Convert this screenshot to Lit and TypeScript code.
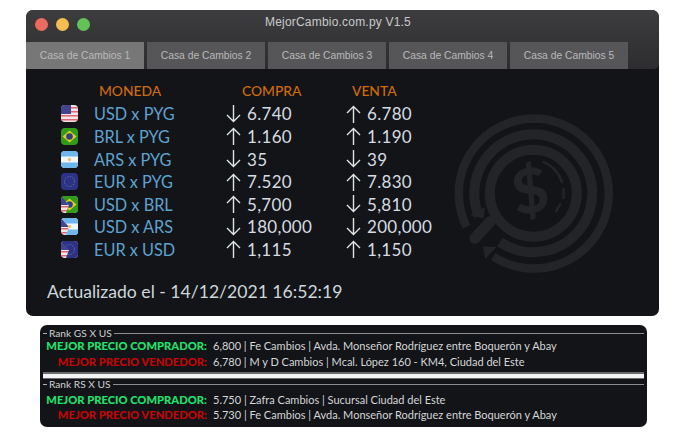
import { LitElement, html, svg, css } from 'lit'
import { customElement } from 'lit/decorators.js'

type Code = 'us' | 'br' | 'ar' | 'eu'

const flagArt = {
	us: svg`<rect width="17" height="17" fill="#f2e6e8" />
		<path d="M0 2h17v1.6H0zM0 6h17v1.6H0zM0 10h17v1.6H0zM0 14h17v1.6H0z" fill="#dd6472" />
		<rect width="10" height="9" fill="#41458f" />`,
	br: svg`<rect width="17" height="17" fill="#2f9c1a" />
		<path d="M8.5 2.5 15.5 8.5 8.5 14.5 1.5 8.5z" fill="#e9cb1c" />
		<circle cx="8.5" cy="8.5" r="3.3" fill="#2f3f8c" />`,
	ar: svg`<rect width="17" height="17" fill="#f2f6fb" />
		<rect width="17" height="5.5" fill="#6db6ee" />
		<rect y="11.5" width="17" height="5.5" fill="#6db6ee" />
		<circle cx="8.5" cy="8.5" r="1.7" fill="#ecc56a" />`,
	eu: svg`<rect width="17" height="17" fill="#2c3386" />
		<circle cx="8.5" cy="8.5" r="5" fill="none" stroke="#565f9c" stroke-width="1.2" stroke-dasharray="1.4 1.2" />`,
}

const rates: { a: Code; b?: Code; pair: string; buy: [string, string]; sell: [string, string] }[] = [
	{ a: 'us', pair: 'USD x PYG', buy: ['d', '6.740'], sell: ['u', '6.780'] },
	{ a: 'br', pair: 'BRL x PYG', buy: ['u', '1.160'], sell: ['u', '1.190'] },
	{ a: 'ar', pair: 'ARS x PYG', buy: ['d', '35'], sell: ['d', '39'] },
	{ a: 'eu', pair: 'EUR x PYG', buy: ['u', '7.520'], sell: ['u', '7.830'] },
	{ a: 'us', b: 'br', pair: 'USD x BRL', buy: ['u', '5,700'], sell: ['d', '5,810'] },
	{ a: 'us', b: 'ar', pair: 'USD x ARS', buy: ['d', '180,000'], sell: ['d', '200,000'] },
	{ a: 'us', b: 'eu', pair: 'EUR x USD', buy: ['u', '1,115'], sell: ['u', '1,150'] },
]

const ranks = [
	{
		title: 'Rank GS X US',
		buy: '6,800 | Fe Cambios | Avda. Monseñor Rodríguez entre Boquerón y Abay',
		sell: '6,780 | M y D Cambios | Mcal. López 160 - KM4, Ciudad del Este',
	},
	{
		title: 'Rank RS X US',
		buy: '5.750 | Zafra Cambios | Sucursal Ciudad del Este',
		sell: '5.730 | Fe Cambios | Avda. Monseñor Rodríguez entre Boquerón y Abay',
	},
]

const tabs = [1, 2, 3, 4, 5]

@customElement('app-root')
export class AppRoot extends LitElement {
	static styles = css`
		:host {
			display: block;
			width: 690px;
			height: 438px;
			background: #fff;
			font-family: Lato, 'Liberation Sans', sans-serif;
			overflow: hidden;
		}

		.page {
			display: flex;
			flex-direction: column;
			padding: 10px 31px 0 26px;
		}

		.window {
			position: relative;
			height: 306px;
			border-radius: 7px;
			overflow: hidden;
			background: #131417;
			display: flex;
			flex-direction: column;
		}

		.chrome {
			height: 59px;
			flex: none;
			display: flex;
			flex-direction: column;
			background: linear-gradient(#3d3d3f, #2d2d2f);
			border-radius: 0 0 5px 0;
			font-family: 'Liberation Sans', Arial, sans-serif;
		}

		.titlebar {
			height: 32px;
			flex: none;
			position: relative;
			display: flex;
			align-items: center;
			justify-content: center;
			padding: 0 9px 9px 0;
			box-sizing: border-box;
			color: #c9c9c9;
			font-size: 12px;
			letter-spacing: 0.2px;
		}

		.lights {
			position: absolute;
			left: 9px;
			top: 8px;
			display: flex;
			gap: 8px;
		}

		.lights i {
			width: 13px;
			height: 13px;
			border-radius: 50%;
		}

		.tabs {
			display: flex;
			gap: 3px;
			height: 27px;
		}

		.tab {
			width: 118px;
			display: flex;
			align-items: center;
			justify-content: center;
			background: #565658;
			color: #b9b9b9;
			font-size: 10.3px;
		}

		.tab.on {
			background: #777778;
		}

		.body {
			flex: 1;
			padding: 10px 0 0 35px;
		}

		.table {
			display: grid;
			grid-template-columns: 33px 132px 120px 1fr;
			grid-template-rows: 23.6px;
			grid-auto-rows: 22.6px;
			align-items: center;
			font-size: 17px;
			color: #d5dde2;
			white-space: nowrap;
		}

		.head {
			font-size: 13.8px;
			font-weight: 500;
			color: #d16b04;
			margin-bottom: 1px;
		}

		.head-pair {
			padding-left: 5px;
		}

		.head-buy {
			padding-left: 16px;
		}

		.head-sell {
			padding-left: 6px;
		}

		.pair {
			font-size: 16.3px;
			color: #5da3d1;
		}

		.flag {
			display: block;
			width: 17px;
			height: 17px;
		}

		.val {
			display: flex;
			align-items: center;
			gap: 6px;
			letter-spacing: 0.3px;
		}

		.val svg {
			width: 15px;
			height: 18px;
			flex: none;
		}

		.updated {
			margin: 20px 0 0 -14px;
			font-size: 17.6px;
			color: #ccd8da;
		}

		.mark {
			position: absolute;
			left: 414px;
			top: 100px;
			width: 160px;
			height: 160px;
			overflow: visible;
		}

		.panel {
			margin: 9px 0 0 14px;
			width: 607px;
			height: 102px;
			box-sizing: border-box;
			padding: 3px 3px 0;
			background: #131417;
			border-radius: 7px;
			display: flex;
			flex-direction: column;
			color: #d4d6d8;
			font-size: 11px;
		}

		.group {
			height: 39px;
			flex: none;
		}

		.legend {
			display: flex;
			align-items: center;
			gap: 2px;
			height: 11px;
			font-size: 10.2px;
			line-height: 11px;
			color: #cfd1d3;
		}

		.legend::before {
			content: '';
			width: 4px;
			height: 1px;
			background: #b0b0b0;
		}

		.legend::after {
			content: '';
			flex: 1;
			height: 1px;
			background: #8c8c8c;
		}

		.rank {
			display: grid;
			grid-template-columns: 164px 1fr;
			gap: 6px;
			align-items: center;
			height: 16px;
			white-space: nowrap;
		}

		.first {
			margin-top: -2px;
		}

		.lower .first {
			margin-top: 1px;
		}

		.lower .rank + .rank {
			height: 14px;
		}

		.rank b {
			font-size: 11.2px;
			font-weight: 900;
			text-align: right;
		}

		.buy {
			color: #1fe26c;
		}

		.sell {
			color: #c40404;
		}

		.divider {
			flex: none;
			height: 7px;
			margin-top: 5px;
			box-sizing: border-box;
			background: #f4f4f4;
			border-top: 2px solid #6c6c6c;
			border-bottom: 1px solid #6c6c6c;
		}
	`

	private flag(a: Code, b: Code | undefined, i: number) {
		return html`<svg class="flag" viewBox="0 0 17 17">
			<defs>
				<clipPath id="round${i}"><rect width="17" height="17" rx="4" /></clipPath>
				<clipPath id="half${i}"><path d="M0 0H17V17H5L8 9z" /></clipPath>
			</defs>
			<g clip-path="url(#round${i})">
				${flagArt[a]} ${b ? svg`<g clip-path="url(#half${i})">${flagArt[b]}</g>` : ''}
			</g>
		</svg>`
	}

	private value([dir, text]: [string, string]) {
		const d = dir === 'u' ? 'M7.5 18V1.5M1 8l6.5-6.5L14 8' : 'M7.5 0V16.5M1 10l6.5 6.5L14 10'
		return html`<span class="val">
			<svg viewBox="0 0 15 18"><path d=${d} fill="none" stroke="#dfe4e6" stroke-width="1.4" /></svg>
			${text}
		</span>`
	}

	private watermark() {
		return html`<svg class="mark" viewBox="0 0 160 160">
			<g fill="none" stroke="#232427">
				<path d="M26.6 116.9A75 75 0 1 1 53.3 146.7" stroke-width="8.5" />
				<path d="M38.8 105.9A59 59 0 1 1 60 132" stroke-width="10" />
				<circle cx="93.3" cy="83.3" r="43.5" stroke-width="10" />
				<path d="M50 111.7 35 128.3" stroke-width="11" stroke-linecap="round" />
				<path d="M103.5 52A33 33 0 0 1 122 72M123.5 79V88M120.5 94 116 101" stroke-width="2.5" stroke-linecap="round" />
			</g>
			<path d="M30 105 45 97 43.5 108.5zM43 136.5 56.5 137 45 149z" fill="#232427" />
			<text x="90" y="103" transform="rotate(-10 90 80)" text-anchor="middle" font-size="62" font-weight="900" fill="#232427">$</text>
		</svg>`
	}

	render() {
		return html`<div class="page">
			<div class="window">
				<div class="chrome">
					<div class="titlebar">
						<div class="lights">
							<i style="background:#ee6a5f"></i>
							<i style="background:#f5bd4f"></i>
							<i style="background:#61c454"></i>
						</div>
						MejorCambio.com.py V1.5
					</div>
					<div class="tabs">
						${tabs.map((n) => html`<div class="tab ${n === 1 ? 'on' : ''}">Casa de Cambios ${n}</div>`)}
					</div>
				</div>
				<div class="body">
					<div class="table">
						<span class="head"></span>
						<span class="head head-pair">MONEDA</span>
						<span class="head head-buy">COMPRA</span>
						<span class="head head-sell">VENTA</span>
						${rates.map(
							(r, i) => html`
								${this.flag(r.a, r.b, i)}
								<span class="pair">${r.pair}</span>
								${this.value(r.buy)} ${this.value(r.sell)}
							`,
						)}
					</div>
					<div class="updated">Actualizado el - 14/12/2021 16:52:19</div>
				</div>
				${this.watermark()}
			</div>
			<div class="panel">
				${ranks.map(
					(r, i) => html`
						${i ? html`<div class="divider"></div>` : ''}
						<div class="group ${i ? 'lower' : ''}">
							<div class="legend">${r.title}</div>
							<div class="rank first"><b class="buy">MEJOR PRECIO COMPRADOR:</b><span>${r.buy}</span></div>
							<div class="rank"><b class="sell">MEJOR PRECIO VENDEDOR:</b><span>${r.sell}</span></div>
						</div>
					`,
				)}
			</div>
		</div>`
	}
}
